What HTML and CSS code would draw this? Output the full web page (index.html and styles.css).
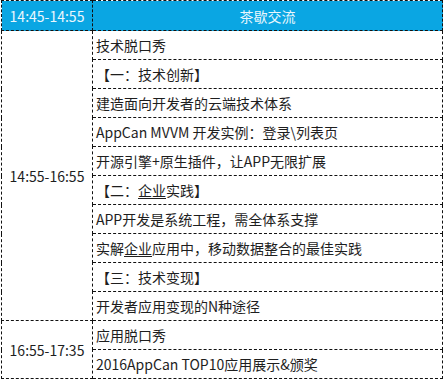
FILE: index.html
```html
<!DOCTYPE html>
<html lang="zh-CN">
<head>
<meta charset="utf-8">
<title>日程</title>
<link rel="stylesheet" href="styles.css">
</head>
<body>
<table class="agenda">
  <colgroup><col class="c-time"><col class="c-topic"></colgroup>
  <tr class="head">
    <td class="time">14:45-14:55</td>
    <td class="center">茶歇交流</td>
  </tr>
  <tr>
    <td class="time" rowspan="10">14:55-16:55</td>
    <td>技术脱口秀</td>
  </tr>
  <tr><td>【一：技术创新】</td></tr>
  <tr><td>建造面向开发者的云端技术体系</td></tr>
  <tr><td>AppCan MVVM 开发实例：登录\列表页</td></tr>
  <tr><td>开源引擎+原生插件，让APP无限扩展</td></tr>
  <tr><td>【二：<span class="ul">企业</span>实践】</td></tr>
  <tr><td>APP开发是系统工程，需全体系支撑</td></tr>
  <tr><td>实解<span class="ul">企业</span>应用中，移动数据整合的最佳实践</td></tr>
  <tr><td>【三：技术变现】</td></tr>
  <tr><td>开发者应用变现的N种途径</td></tr>
  <tr>
    <td class="time" rowspan="2">16:55-17:35</td>
    <td>应用脱口秀</td>
  </tr>
  <tr><td>2016AppCan TOP10应用展示&amp;颁奖</td></tr>
</table>
</body>
</html>
```
FILE: styles.css
```css
html, body {
  margin: 0;
  padding: 0;
  background: #fff;
}
body {
  padding-left: 1px;
  font-family: "Noto Sans CJK SC", "Noto Sans", sans-serif;
  font-size: 14px;
  color: #1e1e1e;
}
.agenda {
  border-collapse: collapse;
  width: 442px;
  table-layout: fixed;
}
.c-time { width: 91px; }
.agenda td {
  border: 1px dashed #111;
  height: 29px;
  padding: 0 0 0 3px;
  line-height: 18px;
  white-space: nowrap;
  box-sizing: border-box;
}
.agenda tr:first-child td { height: 30px; }
.agenda td.time {
  text-align: center;
  padding: 0;
}
.agenda td.center {
  text-align: center;
  padding: 0;
}
.head td {
  background: #0aa6e3;
  color: #eaf7fd;
}
.ul {
  text-decoration: underline;
  text-underline-offset: 2px;
}
```
